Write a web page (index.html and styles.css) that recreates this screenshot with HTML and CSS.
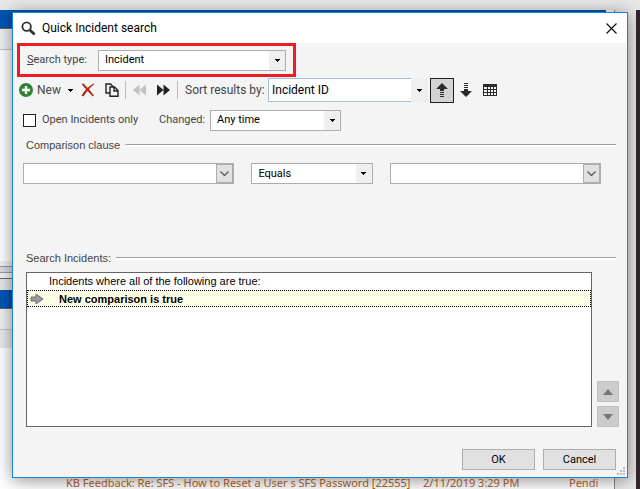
FILE: index.html
```html
<!doctype html>
<html lang="en">
<head>
  <meta charset="UTF-8">
  <meta name="viewport" content="width=device-width, initial-scale=1.0">
  <title>Quick Incident search</title>
  <link rel="stylesheet" href="styles.css">
</head>
<body>
  <div class="backdrop">
    <div class="back-window">
      <div class="back-title"></div>
      <div class="back-bar"></div>
      <div class="back-space"></div>
      <div class="back-splitter"></div>
      <div class="back-frame"></div>
      <div class="back-title"></div>
      <div class="back-bar"></div>
      <div class="back-head"></div>
      <div class="back-list">
        <div class="back-row">
          <span class="subject">KB Feedback: Re: SFS - How to Reset a User s SFS Password [22555]</span>
          <span class="date">2/11/2019 3:29 PM</span>
          <span class="status">Pendi</span>
        </div>
      </div>
    </div>
    <div class="back-edge"></div>
  </div>

  <form class="dialog" role="dialog" aria-labelledby="dialog-title">
    <header class="titlebar">
      <svg class="title-icon" viewBox="0 0 16 16">
        <circle cx="6" cy="6" r="4.5" fill="none" stroke="#333" stroke-width="2"/>
        <path d="M9.5 9.5L14.5 14.5" stroke="#333" stroke-width="3"/>
      </svg>
      <h1 id="dialog-title">Quick Incident search</h1>
      <button type="button" class="close" aria-label="Close">
        <svg viewBox="0 0 11 11"><path d="M.5 .5L10.5 10.5M10.5 .5L.5 10.5" stroke="#111" stroke-width="1.2"/></svg>
      </button>
    </header>

    <div class="search-type">
      <label for="type"><u>S</u>earch type:</label>
      <div class="combo type">
        <select id="type"><option>Incident</option></select>
        <span class="drop"><svg viewBox="0 0 5 3"><path d="M0 0H5V1H4V2H3V3H2V2H1V1H0Z"/></svg></span>
      </div>
    </div>

    <div class="toolbar">
      <button type="button" class="tool new">
        <svg class="icon-14" viewBox="0 0 14 14">
          <circle cx="7" cy="7" r="7" fill="#2e8434"/>
          <path d="M7 3V11M3 7H11" stroke="#fff" stroke-width="2.4"/>
        </svg>
        <span>New</span>
        <svg class="caret" viewBox="0 0 5 3"><path d="M0 0H5V1H4V2H3V3H2V2H1V1H0Z"/></svg>
      </button>
      <button type="button" class="tool" aria-label="Delete">
        <svg class="icon-14" viewBox="0 0 14 14" fill="#a82c12">
          <path d="M0.5 1L2.5 0.5C6 4 10 8.5 13 12.5L12 13.5C8 9.5 4 5.5 0.5 1Z"/>
          <path d="M12.5 0.5L13.5 1C9 4.5 5 9 2.5 13.5L0.5 12.5C3.5 7.5 8 3 12.5 0.5Z"/>
        </svg>
      </button>
      <button type="button" class="tool" aria-label="Copy">
        <svg class="icon-14" viewBox="0 0 14 14" fill="#f4f4f4" stroke="#222" stroke-width="1.4">
          <path d="M1 1H5.5L8 3.5V10H1Z"/>
          <path d="M5 4H9.5L13 7.5V13.2H5Z"/>
          <path d="M9 4V8H13" fill="none"/>
        </svg>
      </button>
      <span class="separator"></span>
      <button type="button" class="tool" aria-label="Previous" disabled>
        <svg class="icon-14" viewBox="0 0 14 14" fill="#c2c2c2"><path d="M6.500 1.500V12.500L0 7ZM13 1.500V12.500L6.500 7Z"/></svg>
      </button>
      <button type="button" class="tool" aria-label="Next">
        <svg class="icon-14" viewBox="0 0 14 14" fill="#222"><path d="M0 1.500V12.500L6.500 7ZM6.500 1.500V12.500L13 7Z"/></svg>
      </button>
      <span class="separator"></span>
      <label for="sort">Sort results by:</label>
      <div class="combo sort">
        <select id="sort"><option>Incident ID</option></select>
        <span class="drop"><svg viewBox="0 0 5 3"><path d="M0 0H5V1H4V2H3V3H2V2H1V1H0Z"/></svg></span>
      </div>
      <div class="sort-tools">
        <button type="button" class="order active" aria-label="Ascending" aria-pressed="true">
          <svg class="icon-14" viewBox="0 0 14 14" fill="#2b2b2b"><path d="M7 0L12.5 5.5V6H9V8H5V6H1.5V5.5ZM5 9H9V10H5ZM5 11H9V12H5ZM5 13H9V14H5Z"/></svg>
        </button>
        <button type="button" class="order" aria-label="Descending">
          <svg class="icon-14" viewBox="0 0 14 14" fill="#2b2b2b"><path d="M7 14L12.5 8.5V8H9V6H5V8H1.5V8.5ZM5 4H9V5H5ZM5 2H9V3H5ZM5 0H9V1H5Z"/></svg>
        </button>
        <button type="button" class="order" aria-label="Columns">
          <svg class="icon-14" viewBox="0 0 14 14">
            <path d="M0 1H14V13H0Z" fill="#2b2b2b"/>
            <path d="M1 4H4V6H1ZM5 4H7V6H5ZM8 4H10V6H8ZM11 4H13V6H11ZM1 7H4V9H1ZM5 7H7V9H5ZM8 7H10V9H8ZM11 7H13V9H11ZM1 10H4V12H1ZM5 10H7V12H5ZM8 10H10V12H8ZM11 10H13V12H11Z" fill="#f4f4f4"/>
          </svg>
        </button>
      </div>
    </div>

    <div class="filters">
      <label class="check"><input type="checkbox"> Open Incidents only</label>
      <label for="changed">Changed:</label>
      <div class="combo changed">
        <select id="changed"><option>Any time</option></select>
        <span class="drop"><svg viewBox="0 0 5 3"><path d="M0 0H5V1H4V2H3V3H2V2H1V1H0Z"/></svg></span>
      </div>
    </div>

    <h2 class="section-title">Comparison clause</h2>
    <div class="clause">
      <div class="combo editable">
        <select aria-label="Field"><option></option></select>
        <span class="drop"><svg viewBox="0 0 9 5"><path d="M.5 .5L4.5 4.5L8.5 .5" fill="none" stroke="#555" stroke-width="1.2"/></svg></span>
      </div>
      <div class="combo operator">
        <select aria-label="Operator"><option>Equals</option></select>
        <span class="drop"><svg viewBox="0 0 5 3"><path d="M0 0H5V1H4V2H3V3H2V2H1V1H0Z"/></svg></span>
      </div>
      <div class="combo editable">
        <select aria-label="Value"><option></option></select>
        <span class="drop"><svg viewBox="0 0 9 5"><path d="M.5 .5L4.5 4.5L8.5 .5" fill="none" stroke="#555" stroke-width="1.2"/></svg></span>
      </div>
    </div>

    <h2 class="section-title">Search Incidents:</h2>
    <div class="criteria">
      <ul class="criteria-list">
        <li>Incidents where all of the following are true:</li>
        <li class="current">
          <svg viewBox="0 0 14 12"><path d="M1 4H6V1L13 6L6 11V8H1Z" fill="#999" stroke="#6e6e6e"/></svg>
          New comparison is true
        </li>
      </ul>
      <div class="move">
        <button type="button" aria-label="Move up"><svg viewBox="0 0 10 6"><path d="M5 0L10 6H0Z"/></svg></button>
        <button type="button" aria-label="Move down"><svg viewBox="0 0 10 6"><path d="M0 0H10L5 6Z"/></svg></button>
      </div>
    </div>

    <footer class="actions">
      <button type="submit">OK</button>
      <button type="button">Cancel</button>
      <svg class="grip" viewBox="0 0 8 8"><path d="M6 0H8V2H6ZM3 3H5V5H3ZM6 3H8V5H6ZM0 6H2V8H0ZM3 6H5V8H3ZM6 6H8V8H6Z"/></svg>
    </footer>
  </form>
</body>
</html>
```

FILE: styles.css
```css
:root {
  --face: #f4f4f4;
  --border: #adadad;
  --text: #444;
  --blue: #0054b5;
}

* {
  box-sizing: border-box;
  margin: 0;
  padding: 0;
}

body {
  position: relative;
  min-height: 100vh;
  padding: 12px 12px 11px;
  background: #e8e8e8;
  font-family: Roboto, "Liberation Sans", sans-serif;
  font-size: 11px;
  line-height: 16px;
  color: var(--text);
  overflow: hidden;
}

button,
select {
  font: inherit;
  color: #000;
}

svg {
  display: block;
  flex: none;
}

/* application window behind the dialog */
.backdrop {
  position: absolute;
  inset: 10px 0 0;
  display: flex;
  justify-content: space-between;
}

.back-window {
  display: flex;
  flex-direction: column;
  flex: 1;
  margin-right: 21px;
  border-right: 1px solid #888;
  background: #fff;
}

.back-title {
  height: 19px;
  background: var(--blue);
  border-bottom: 1px solid #666;
}

.back-window > .back-title:first-child {
  margin-right: 8px;
}

.back-bar {
  height: 21px;
  background: #f0f0f3;
  border-bottom: 1px solid #c4c4c8;
}

.back-space {
  height: 211px;
}

.back-splitter {
  height: 18px;
  background: linear-gradient(#f0f0f0 5px, #999 5px, #999 6px, #dcdce4 6px, #dcdce4 11px, #999 11px, #999 12px, #f4f4f8 12px);
  border-bottom: 1px solid #666;
}

.back-frame {
  height: 11px;
  background: #e6e6e6;
}

.back-head {
  height: 18px;
  background: #e8e8ea;
}

.back-list {
  display: flex;
  flex-direction: column;
  justify-content: flex-end;
  flex: 1;
}

.back-row {
  display: grid;
  grid-template-columns: 357px 146px 1fr;
  padding-left: 66px;
  font-family: "Noto Sans", sans-serif;
  font-size: 11px;
  line-height: 13px;
  white-space: nowrap;
  color: #b5652b;
}

.back-edge {
  width: 4px;
  background: #33262f;
}

.dialog {
  position: relative;
  background: var(--face);
  border: 1px solid #1883d7;
  box-shadow: 0 2px 16px rgba(0, 0, 0, 0.45);
}

.titlebar {
  display: flex;
  align-items: center;
  gap: 6px;
  height: 30px;
  padding: 0 10px 0 8px;
  background: #fff;
}

.title-icon {
  width: 15px;
  height: 15px;
}

.titlebar h1 {
  flex: 1;
  font-size: 12px;
  font-weight: 400;
  color: #000;
}

.close {
  background: none;
  border: none;
}

.close svg {
  width: 11px;
  height: 11px;
}

.search-type {
  display: flex;
  align-items: center;
  width: 279px;
  height: 34px;
  margin-left: 4px;
  padding-left: 7px;
  border: 3px solid #ed1c24;
}

.search-type label {
  width: 71px;
}

/* drop-downs */
.combo {
  position: relative;
  height: 21px;
}

.combo select {
  appearance: none;
  width: 100%;
  height: 100%;
  padding: 0 20px 0 6px;
  background: #fff;
  border: 1px solid var(--border);
  border-radius: 0;
}

.combo .drop {
  position: absolute;
  inset: 1px 1px 1px auto;
  display: flex;
  align-items: center;
  justify-content: center;
  width: 16px;
  background: #efefef;
  pointer-events: none;
}

.drop svg,
.caret {
  width: 5px;
  height: 3px;
}

.combo.type {
  width: 188px;
}

.combo.sort {
  width: 160px;
  height: 24px;
}

.combo.sort select {
  padding-left: 3px;
  border-color: #a3bfe0;
}

.combo.sort .drop {
  inset: 0 0 0 auto;
  width: 17px;
}

.combo.changed {
  width: 131px;
}

.combo.operator {
  flex: 121;
}

.combo.editable {
  flex: 211;
}

.editable .drop {
  width: 17px;
  background: #e1e1e1;
  border: 1px solid var(--border);
}

.editable .drop svg {
  width: 9px;
  height: 5px;
}

.toolbar {
  display: flex;
  align-items: center;
  height: 26px;
  padding-left: 6px;
  font-size: 12px;
}

.tool {
  display: flex;
  align-items: center;
  width: 24px;
  background: none;
  border: none;
}

.tool:has(+ .separator) {
  width: 20px;
}

.tool.new {
  gap: 4px;
  width: 62px;
  color: var(--text);
}

.tool .caret {
  margin-left: 3px;
}

.icon-14 {
  width: 14px;
  height: 14px;
}

.separator {
  width: 1px;
  height: 18px;
  margin-right: 7px;
  background: #bbb;
}

.toolbar label {
  width: 83px;
}

.sort-tools {
  display: flex;
  margin-left: 2px;
}

.order {
  display: flex;
  align-items: center;
  justify-content: center;
  width: 24px;
  height: 25px;
  background: none;
  border: 1px solid transparent;
}

.order.active {
  background: #d3d3d3;
  border-color: #1e1e1e;
}

.filters {
  display: flex;
  align-items: center;
  height: 34px;
  padding-left: 10px;
}

.check {
  display: flex;
  align-items: center;
  gap: 6px;
  width: 136px;
}

.check input {
  appearance: none;
  width: 13px;
  height: 13px;
  background: #fff;
  border: 1px solid #222;
}

.check input:checked {
  background: #222;
}

.filters > label:not(.check) {
  width: 51px;
}

.section-title,
.criteria-list {
  font-family: "Liberation Sans", sans-serif;
  font-size: 11px;
}

.section-title {
  display: flex;
  align-items: center;
  gap: 5px;
  margin: 0 11px 0 13px;
  font-weight: 400;
}

.section-title::after {
  content: '';
  flex: 1;
  height: 2px;
  background: #fff;
  border-top: 1px solid #a0a0a0;
}

.clause {
  display: flex;
  gap: 17px;
  margin: 10px 26px 66px 10px;
}

.criteria {
  display: flex;
  gap: 5px;
  margin: 6px 8px 0 13px;
}

.criteria-list {
  flex: 1;
  min-height: 155px;
  background: #fff;
  border: 1px solid #646464;
  list-style: none;
  color: #000;
}

.criteria-list li {
  height: 17px;
  padding-left: 22px;
}

.criteria-list .current {
  display: flex;
  align-items: center;
  gap: 15px;
  padding-left: 2px;
  background: #ffffe8;
  border: 1px dotted #000;
  font-weight: 700;
}

.current svg {
  width: 14px;
  height: 12px;
}

.move {
  display: flex;
  flex-direction: column;
  justify-content: flex-end;
  gap: 4px;
}

.move button {
  display: flex;
  align-items: center;
  justify-content: center;
  width: 22px;
  height: 21px;
  background: #ccc;
  border: 1px solid #bfbfbf;
}

.move svg {
  width: 10px;
  height: 6px;
  fill: #777;
}

.actions {
  display: flex;
  justify-content: flex-end;
  gap: 8px;
  padding: 22px 11px 7px;
}

.actions button {
  width: 73px;
  height: 21px;
  background: #e1e1e1;
  border: 1px solid var(--border);
}

.grip {
  position: absolute;
  right: 2px;
  bottom: 2px;
  width: 8px;
  height: 8px;
  fill: #bdbdbd;
}
```
